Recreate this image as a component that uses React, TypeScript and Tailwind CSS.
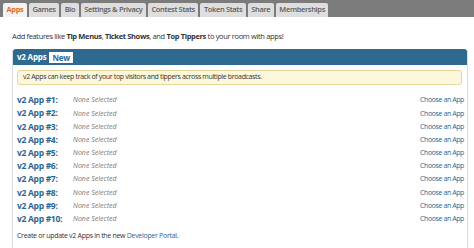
const tabs = ["Apps", "Games", "Bio", "Settings & Privacy", "Contest Stats", "Token Stats", "Share", "Memberships"];

const slots = Array.from({ length: 10 }, (_, i) => i + 1);

export default function App() {
  return (
    <div className="h-[248px] w-[474px] overflow-hidden bg-white font-['Open_Sans',sans-serif] text-[8px] text-[#333]">
      <div className="flex h-[17px] items-end gap-[2px] bg-[#7b7b7b] pl-[3px]">
        {tabs.map((tab, i) => (
          <div
            key={tab}
            className={
              i === 0
                ? "flex h-[14px] items-center rounded-t-[2px] bg-[#f3f3f3] px-[3.5px] text-[7.5px] font-bold tracking-[-0.35px] text-[#e56b22]"
                : "flex h-[14px] items-center rounded-t-[2px] bg-[#dedede] px-[3.5px] text-[7.5px] font-semibold tracking-[-0.35px] text-[#5c5c5c]"
            }
          >
            {tab}
          </div>
        ))}
      </div>

      <p className="mt-[13px] pl-[12px] text-[7.5px] leading-[12px] tracking-[-0.35px]">
        Add features like <b>Tip Menus</b>, <b>Ticket Shows</b>, and <b>Top Tippers</b> to your room with apps!
      </p>

      <section className="ml-[12px] mr-[6px] mt-[7px] rounded-t-[3px] border border-t-0 border-[#dcdcdc]">
        <header className="flex h-[16px] items-center gap-[3px] rounded-t-[3px] bg-[#2e6a90] px-[4px] text-[8px] font-bold tracking-[-0.2px] text-white">
          <span>v2 Apps</span>
          <span className="bg-white px-[3px] leading-[11px] text-[#2e6a90]">New</span>
        </header>

        <div className="pl-[4px] pr-[3px] pt-[5px]">
          <div className="mr-[2px] flex h-[15px] items-center rounded-[3px] border border-[#e9d89b] bg-[#fdf7dc] px-[5px] text-[7px] tracking-[-0.35px]">
            v2 Apps can keep track of your top visitors and tippers across multiple broadcasts.
          </div>

          <div className="mt-[9px] flex flex-col">
            {slots.map((n) => (
              <div key={n} className="flex h-[13.2px] items-center">
                <span className="w-[56px] text-[8.5px] font-bold tracking-[-0.3px] text-[#2b6792]">v2 App #{n}:</span>
                <span className="flex-1 text-[7px] italic text-[#777]">None Selected</span>
                <span className="text-[7px] tracking-[-0.4px] text-[#2b6792]">Choose an App</span>
              </div>
            ))}
          </div>

          <p className="mt-[4px] pb-[6px] text-[7px] leading-[12px] tracking-[-0.3px]">
            Create or update v2 Apps in the new <span className="text-[#2b6792]">Developer Portal</span>.
          </p>
        </div>
      </section>
    </div>
  );
}
